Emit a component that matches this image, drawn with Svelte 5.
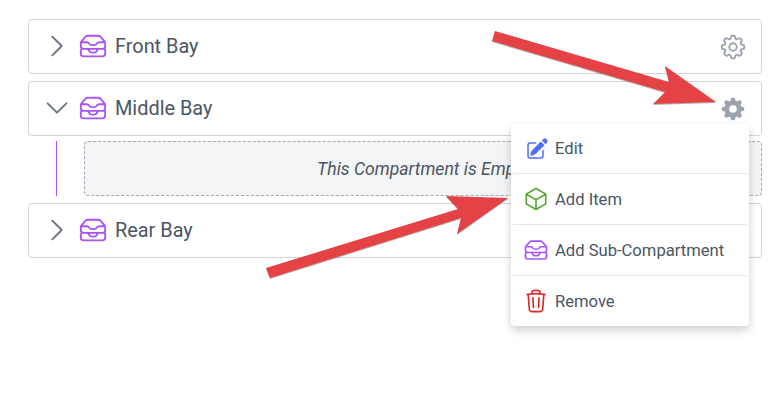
<script>
  const bays = [
    { name: 'Front Bay', open: false },
    { name: 'Middle Bay', open: true },
    { name: 'Rear Bay', open: false }
  ];

  const gearPath =
    'M10.343 3.94c.09-.542.56-.94 1.11-.94h1.093c.55 0 1.02.398 1.11.94l.149.894c.07.424.384.764.78.93.398.164.855.142 1.205-.108l.737-.527a1.125 1.125 0 011.45.12l.773.774c.39.389.44 1.002.12 1.45l-.527.737c-.25.35-.272.806-.107 1.204.165.397.505.71.93.78l.893.15c.543.09.94.56.94 1.109v1.094c0 .55-.397 1.02-.94 1.11l-.893.149c-.425.07-.765.383-.93.78-.165.398-.143.854.107 1.204l.527.738c.32.447.269 1.06-.12 1.45l-.774.773a1.125 1.125 0 01-1.449.12l-.738-.527c-.35-.25-.806-.272-1.203-.107-.397.165-.71.505-.781.929l-.149.894c-.09.542-.56.94-1.11.94h-1.094c-.55 0-1.019-.398-1.11-.94l-.148-.894c-.071-.424-.384-.764-.781-.93-.398-.164-.854-.142-1.204.108l-.738.527c-.447.32-1.06.269-1.45-.12l-.773-.774a1.125 1.125 0 01-.12-1.45l.527-.737c.25-.35.273-.806.108-1.204-.165-.397-.505-.71-.93-.78l-.894-.15c-.542-.09-.94-.56-.94-1.109v-1.094c0-.55.398-1.02.94-1.11l.894-.149c.424-.07.765-.383.93-.78.165-.398.143-.854-.107-1.204l-.527-.738a1.125 1.125 0 01.12-1.45l.773-.773a1.125 1.125 0 011.45-.12l.737.527c.35.25.807.272 1.204.107.397-.165.71-.505.78-.929l.15-.894zM15 12a3 3 0 11-6 0 3 3 0 016 0z';
</script>

{#snippet inbox(size)}
  <svg class="purple" width={size} height={size} viewBox="0 0 24 24" fill="none" stroke="currentColor" stroke-width="1.5" stroke-linecap="round" stroke-linejoin="round">
    <path d="M7.875 14.25l1.214 1.942a2.25 2.25 0 001.908 1.058h2.006c.776 0 1.497-.4 1.908-1.058l1.214-1.942M2.41 9h4.636a2.25 2.25 0 011.872 1.002l.164.246a2.25 2.25 0 001.872 1.002h2.092a2.25 2.25 0 001.872-1.002l.164-.246A2.25 2.25 0 0116.954 9h4.636M2.41 9a2.25 2.25 0 00-.16.832V12A2.25 2.25 0 004.5 14.25h15A2.25 2.25 0 0021.75 12V9.832c0-.287-.055-.57-.16-.832M2.41 9a2.25 2.25 0 01.382-.632l3.285-3.832a2.25 2.25 0 011.708-.786h8.43c.657 0 1.281.287 1.709.786l3.284 3.832c.163.19.291.404.382.632M4.5 20.25h15A2.25 2.25 0 0021.75 18v-2.625c0-.621-.504-1.125-1.125-1.125H3.375c-.621 0-1.125.504-1.125 1.125V18a2.25 2.25 0 002.25 2.25z" />
  </svg>
{/snippet}

<div class="tree">
  {#each bays as bay}
    <div class="bay">
      <div class="row">
        <svg class="chevron" width="30" height="30" viewBox="0 0 24 24" fill="none" stroke="currentColor" stroke-width="1.5" stroke-linecap="round" stroke-linejoin="round">
          {#if bay.open}
            <path d="M19.5 8.25l-7.5 7.5-7.5-7.5" />
          {:else}
            <path d="M8.25 4.5l7.5 7.5-7.5 7.5" />
          {/if}
        </svg>
        {@render inbox(30)}
        <span class="name">{bay.name}</span>
        <svg class="gear" class:solid={bay.open} width="30" height="30" viewBox="0 0 24 24" stroke-width="1.5" stroke-linecap="round" stroke-linejoin="round" fill-rule="evenodd">
          <path d={gearPath} />
        </svg>
      </div>

      {#if bay.open}
        <div class="children">
          <div class="empty">This Compartment is Empty</div>
        </div>

        <div class="menu">
          <div class="item">
            <svg class="blue edit" width="24" height="24" viewBox="0 0 24 24" fill="currentColor">
              <path d="M21.731 2.269a2.625 2.625 0 00-3.712 0l-1.157 1.157 3.712 3.712 1.157-1.157a2.625 2.625 0 000-3.712zM19.513 8.199l-3.712-3.712-8.4 8.4a5.25 5.25 0 00-1.32 2.214l-.8 2.685a.75.75 0 00.933.933l2.685-.8a5.25 5.25 0 002.214-1.32l8.4-8.4z" />
              <path d="M5.25 5.25a3 3 0 00-3 3v10.5a3 3 0 003 3h10.5a3 3 0 003-3V13.5a.75.75 0 00-1.5 0v5.25a1.5 1.5 0 01-1.5 1.5H5.25a1.5 1.5 0 01-1.5-1.5V8.25a1.5 1.5 0 011.5-1.5h5.25a.75.75 0 000-1.5H5.25z" />
            </svg>
            Edit
          </div>
          <div class="item">
            <svg class="green" width="26" height="26" viewBox="0 0 24 24" fill="none" stroke="currentColor" stroke-width="1.5" stroke-linecap="round" stroke-linejoin="round">
              <path d="M21 7.5l-9-5.25L3 7.5m18 0l-9 5.25m9-5.25v9l-9 5.25M3 7.5l9 5.25M3 7.5v9l9 5.25m0-9v9" />
            </svg>
            Add Item
          </div>
          <div class="item">
            {@render inbox(26)}
            Add Sub-Compartment
          </div>
          <div class="item">
            <svg class="red" width="26" height="26" viewBox="0 0 24 24" fill="none" stroke="currentColor" stroke-width="1.5" stroke-linecap="round" stroke-linejoin="round">
              <path d="M14.74 9l-.346 9m-4.788 0L9.26 9m9.968-3.21c.342.052.682.107 1.022.166m-1.022-.165L18.16 19.673a2.25 2.25 0 01-2.244 2.077H8.084a2.25 2.25 0 01-2.244-2.077L4.772 5.79m14.456 0a48.108 48.108 0 00-3.478-.397m-12 .562c.34-.059.68-.114 1.022-.165m0 0a48.11 48.11 0 013.478-.397m7.5 0v-.916c0-1.18-.91-2.164-2.09-2.201a51.964 51.964 0 00-3.32 0c-1.18.037-2.09 1.022-2.09 2.201v.916m7.5 0a48.667 48.667 0 00-7.5 0" />
            </svg>
            Remove
          </div>
        </div>
      {/if}
    </div>
  {/each}

  <!-- annotation arrows drawn over the page -->
  <svg class="arrows" width="775" height="409" viewBox="0 0 775 409">
    <polygon points="495,31 492,41 665,92 653,104 716,102 665,66 669,82" />
    <polygon points="266,268 270,278 461,218 457,234 508,198 446,196 458,209" />
  </svg>
</div>

<style>
  :global(body) {
    background: #fff;
  }

  .tree {
    position: relative;
    display: flex;
    flex-direction: column;
    gap: 7px;
    width: 775px;
    height: 409px;
    box-sizing: border-box;
    padding: 19px 13px 0 28px;
    font-family: Roboto, sans-serif;
    color: #4b5563;
  }

  .bay {
    position: relative;
    display: flex;
    flex-direction: column;
    gap: 5px;
  }

  /* the open bay's menu has to sit above the bay that follows it */
  .bay:has(.menu) {
    z-index: 2;
  }

  .row {
    display: flex;
    align-items: center;
    gap: 6px;
    height: 55px;
    box-sizing: border-box;
    padding: 0 13px 1px;
    border: 1px solid #d1d5db;
    border-radius: 4px;
    background: #fff;
  }

  .chevron {
    color: #6b7280;
  }

  .purple {
    color: #a855f7;
  }

  .blue {
    color: #4f6ef7;
  }

  .green {
    color: #55a630;
  }

  .red {
    color: #dc2626;
  }

  .name {
    font-size: 19.9px;
    margin-left: 1px;
  }

  .gear {
    margin: 2px 0 0 auto;
    fill: none;
    stroke: #9ca3af;
  }

  .gear.solid {
    fill: #9ca3af;
    stroke: none;
  }

  .children {
    position: relative;
    display: flex;
    padding-left: 56px;
  }

  .children::before {
    content: '';
    position: absolute;
    left: 28px;
    top: 0;
    bottom: 0;
    width: 1px;
    background: #a855f7;
  }

  .empty {
    flex: 1;
    height: 55px;
    box-sizing: border-box;
    display: flex;
    align-items: center;
    justify-content: center;
    border: 1px dashed #a3a8b2;
    border-radius: 4px;
    background: #f3f4f6;
    font-size: 17.6px;
    font-style: italic;
  }

  .menu {
    position: absolute;
    top: 43px;
    right: 13px;
    width: 238px;
    display: flex;
    flex-direction: column;
    border-radius: 4px;
    background: #fff;
    box-shadow: 0 4px 10px rgba(0, 0, 0, 0.2);
    font-size: 16.6px;
  }

  .item {
    display: flex;
    align-items: center;
    gap: 6px;
    height: 51px;
    box-sizing: border-box;
    padding: 0 12px;
    border-top: 1px solid #e5e7eb;
    border-radius: 4px;
  }

  .item:first-child {
    height: 49px;
    border-top: 0;
  }

  .edit {
    margin-left: 2px;
  }

  .arrows {
    position: absolute;
    top: 0;
    left: 0;
    z-index: 3;
    pointer-events: none;
    filter: drop-shadow(0 1px 0 rgba(0, 0, 0, 0.3));
  }

  .arrows polygon {
    fill: #e44245;
  }
</style>
